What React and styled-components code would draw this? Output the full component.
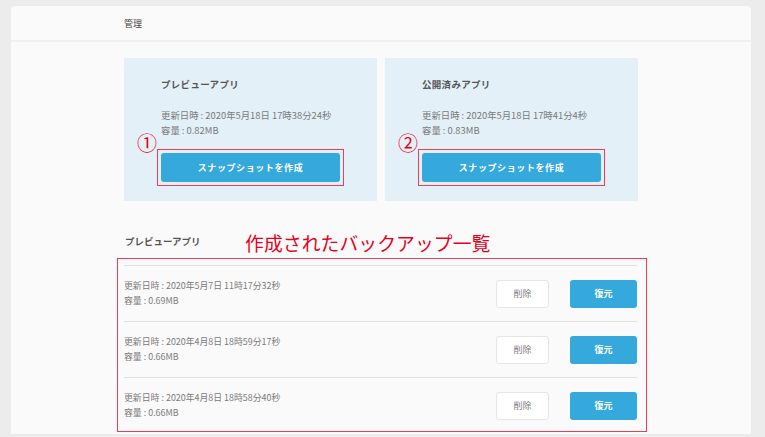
import React from "react";
import styled, { createGlobalStyle } from "styled-components";

const GlobalStyle = createGlobalStyle`
  html, body {
    margin: 0;
    padding: 0;
    background: #ececec;
    overflow: hidden;
  }
  body {
    font-family: "Noto Sans CJK JP", "Noto Sans", sans-serif;
  }
  button:focus {
    outline: none;
  }
`;

const snapshots = [
  { title: "プレビューアプリ", updated: "2020年5月18日 17時38分24秒", size: "0.82MB", mark: "①" },
  { title: "公開済みアプリ", updated: "2020年5月18日 17時41分4秒", size: "0.83MB", mark: "②" },
];

const backups = [
  { updated: "2020年5月7日 11時17分32秒", size: "0.69MB" },
  { updated: "2020年4月8日 18時59分17秒", size: "0.66MB" },
  { updated: "2020年4月8日 18時58分40秒", size: "0.66MB" },
];

const App = () => {
  return (
    <Wrapper>
      <GlobalStyle />
      <Card>
        <Header>管理</Header>
        <Content>
          <Panels>
            {snapshots.map((s) => (
              <Panel key={s.title}>
                <PanelTitle>{s.title}</PanelTitle>
                <Info>
                  <div>更新日時 : {s.updated}</div>
                  <div>容量 : {s.size}</div>
                </Info>
                <Highlight>
                  <Mark>{s.mark}</Mark>
                  <PrimaryButton $wide>スナップショットを作成</PrimaryButton>
                </Highlight>
              </Panel>
            ))}
          </Panels>

          <SectionHead>
            <SectionLabel>プレビューアプリ</SectionLabel>
            <Note>作成されたバックアップ一覧</Note>
          </SectionHead>

          <BackupBox>
            {backups.map((b, i) => (
              <Row key={i}>
                <Info $row>
                  <div>更新日時 : {b.updated}</div>
                  <div>容量 : {b.size}</div>
                </Info>
                <Actions>
                  <GhostButton>削除</GhostButton>
                  <PrimaryButton>復元</PrimaryButton>
                </Actions>
              </Row>
            ))}
          </BackupBox>
        </Content>
      </Card>
    </Wrapper>
  );
};

const Wrapper = styled.div`
  padding: 6px 14px 0 11px;
  height: 437px;
  box-sizing: border-box;
`;

const Card = styled.div`
  background: #fafafa;
  border-radius: 4px 4px 0 0;
  height: 428px;
  overflow: hidden;
`;

const Header = styled.div`
  height: 34px;
  padding-left: 113px;
  display: flex;
  align-items: center;
  font-size: 9px;
  color: #444;
  border-bottom: 2px solid #f0f0f0;
`;

const Content = styled.div`
  padding: 16px 0 0 113px;
`;

const Panels = styled.div`
  display: flex;
  gap: 8px;
`;

const Panel = styled.div`
  width: 253px;
  height: 143px;
  box-sizing: border-box;
  background: #e3f0f7;
  padding: 19px 0 0 37px;
`;

const PanelTitle = styled.div`
  font-size: 9.5px;
  font-weight: 700;
  color: #555;
  line-height: 14px;
  letter-spacing: 0.3px;
`;

const Info = styled.div`
  margin-top: ${(p) => (p.$row ? "0" : "17px")};
  font-size: ${(p) => (p.$row ? "8.9px" : "9.4px")};
  line-height: 14.5px;
  color: #7a7a7a;
`;

const Highlight = styled.div`
  position: relative;
  display: inline-block;
  margin: 12px 0 0 -4px;
  padding: 3px;
  border: 1px solid #ec3d58;
`;

const Mark = styled.span`
  position: absolute;
  left: -21px;
  top: -18px;
  font-size: 20px;
  line-height: 22px;
  color: #e60020;
`;

const PrimaryButton = styled.button`
  display: flex;
  align-items: center;
  justify-content: center;
  width: ${(p) => (p.$wide ? "179px" : "67px")};
  height: ${(p) => (p.$wide ? "29px" : "28px")};
  border: none;
  border-radius: 3px;
  background: #35a8dc;
  color: #fff;
  font-family: inherit;
  font-size: 9px;
  font-weight: 700;
  letter-spacing: ${(p) => (p.$wide ? "0.6px" : "0")};
  padding: 0;
`;

const GhostButton = styled.button`
  display: flex;
  align-items: center;
  justify-content: center;
  width: 53px;
  height: 28px;
  background: #fff;
  border: 1px solid #e6e6e6;
  border-radius: 3px;
  color: #7d7d7d;
  font-family: inherit;
  font-size: 9px;
  padding: 0;
`;

const SectionHead = styled.div`
  display: flex;
  align-items: flex-end;
  margin-top: 30px;
  height: 24px;
`;

const SectionLabel = styled.div`
  font-size: 9.5px;
  font-weight: 700;
  color: #555;
  line-height: 14px;
  margin: 0 0 7px 1px;
  width: 120px;
`;

const Note = styled.div`
  font-size: 18.8px;
  line-height: 24px;
  color: #e60020;
  letter-spacing: 0.1px;
`;

const BackupBox = styled.div`
  margin: 3px 0 0 -7px;
  width: 530px;
  box-sizing: border-box;
  border: 1px solid #ec3d58;
  padding: 6px 9px 0 6px;
`;

const Row = styled.div`
  display: flex;
  align-items: center;
  justify-content: space-between;
  height: 56px;
  border-top: 1px solid #e2e2e2;
  box-sizing: border-box;

  &:last-child {
    height: 54px;
    padding-top: 2px;
  }
`;

const Actions = styled.div`
  display: flex;
  gap: 21px;
`;

export default App;
